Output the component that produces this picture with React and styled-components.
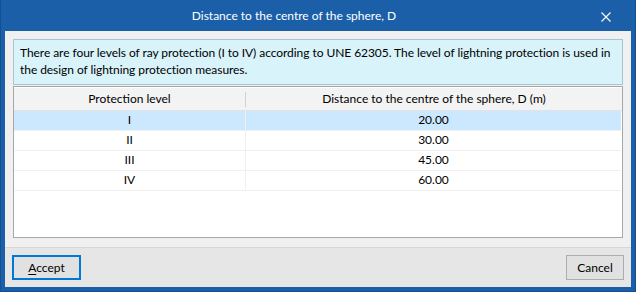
import React from 'react';
import styled, { createGlobalStyle } from 'styled-components';

const GlobalStyle = createGlobalStyle`
  html, body {
    margin: 0;
    padding: 0;
    background: #ffffff;
  }
  body {
    font-family: Lato, "Noto Sans", sans-serif;
    font-size: 12px;
    color: #000;
  }
`;

const Window = styled.div`
  width: 636px;
  height: 292px;
  box-sizing: border-box;
  background: #1a5fa8;
  border-left: 1px solid #134f92;
  border-right: 1px solid #134f92;
  border-bottom: 1px solid #134f92;
  padding: 0 4px 4px 4px;
  display: flex;
  flex-direction: column;
`;

const TitleBar = styled.div`
  height: 31px;
  flex: none;
  position: relative;
  display: flex;
  align-items: center;
  justify-content: center;
  color: #ffffff;
  font-size: 12px;
  padding: 0 48px 1px 0;
  box-sizing: border-box;
`;

const CloseButton = styled.div`
  position: absolute;
  right: 20px;
  top: 12px;
  width: 10px;
  height: 10px;
  display: flex;
`;

const Client = styled.div`
  flex: 1;
  background: #f0f0f0;
  display: flex;
  flex-direction: column;
`;

const Body = styled.div`
  flex: 1;
  padding: 8px 8px 9px 8px;
  display: flex;
  flex-direction: column;
`;

const InfoBox = styled.div`
  height: 46px;
  box-sizing: border-box;
  background: #d9f3fa;
  border: 1px solid #a7c7d0;
  padding: 4px 0 4px 6px;
  line-height: 17px;
  font-size: 12px;
  letter-spacing: -0.005em;
  color: #000;
`;

const Table = styled.div`
  flex: 1;
  margin-top: 1px;
  background: #ffffff;
  border: 1px solid #a8a8a8;
  display: flex;
  flex-direction: column;
`;

const HeaderRow = styled.div`
  display: grid;
  grid-template-columns: 232px 1fr;
  height: 22px;
  background: #f3f3f3;
  border-top: 1px solid #ffffff;
  border-bottom: 1px solid #e3e3e3;
`;

const HeaderCell = styled.div`
  display: flex;
  align-items: center;
  justify-content: center;
  position: relative;
  padding-bottom: 2px;
  box-sizing: border-box;
  border-right: ${p => (p.$divider ? '1px solid transparent' : 'none')};
  &::after {
    content: '';
    display: ${p => (p.$divider ? 'block' : 'none')};
    position: absolute;
    right: -1px;
    top: 4px;
    bottom: 3px;
    width: 1px;
    background: #d2d2d2;
  }
`;

const Row = styled.div`
  display: grid;
  grid-template-columns: 232px 1fr;
  height: 20px;
  margin-right: 1px;
  background: ${p => (p.$selected ? '#cce8ff' : '#ffffff')};
  border-bottom: 1px solid #f0f0f0;
  box-sizing: border-box;
`;

const Cell = styled.div`
  display: flex;
  align-items: center;
  justify-content: center;
  padding-bottom: 2px;
  border-right: ${p => (p.$divider ? '1px solid #f0f0f0' : 'none')};
`;

const Footer = styled.div`
  height: 40px;
  flex: none;
  box-sizing: border-box;
  background: #e6e6e6;
  border-top: 1px solid #d7d7d7;
  display: flex;
  align-items: flex-start;
  justify-content: space-between;
  padding: 7px 7px 0 7px;
`;

const Button = styled.button`
  height: 25px;
  width: ${p => p.$width}px;
  box-sizing: border-box;
  font-family: Lato, "Noto Sans", sans-serif;
  font-size: 12px;
  color: #000;
  background: #e1e1e1;
  border: ${p => (p.$default ? '2px solid #0078d7' : '1px solid #adadad')};
  padding: 0 0 1px 0;
  margin: 0;
  display: flex;
  align-items: center;
  justify-content: center;
  u {
    text-decoration: underline;
    text-underline-offset: 2px;
  }
`;

const rows = [
  { level: 'I', d: '20.00' },
  { level: 'II', d: '30.00' },
  { level: 'III', d: '45.00' },
  { level: 'IV', d: '60.00' },
];

export default function App() {
  return (
    <>
      <GlobalStyle />
      <Window>
        <TitleBar>
          Distance to the centre of the sphere, D
          <CloseButton>
            <svg width="10" height="10" viewBox="0 0 10 10">
              <path d="M0.5 0.5 L9.5 9.5 M9.5 0.5 L0.5 9.5" stroke="#ffffff" strokeWidth="1.1" fill="none" />
            </svg>
          </CloseButton>
        </TitleBar>
        <Client>
          <Body>
            <InfoBox>
              There are four levels of ray protection (I to IV) according to UNE 62305. The level of lightning protection is used in the design of lightning protection measures.
            </InfoBox>
            <Table>
              <HeaderRow>
                <HeaderCell $divider>Protection level</HeaderCell>
                <HeaderCell>Distance to the centre of the sphere, D (m)</HeaderCell>
              </HeaderRow>
              {rows.map((r, i) => (
                <Row key={r.level} $selected={i === 0}>
                  <Cell $divider>{r.level}</Cell>
                  <Cell>{r.d}</Cell>
                </Row>
              ))}
            </Table>
          </Body>
          <Footer>
            <Button $default $width={69}><span><u>A</u>ccept</span></Button>
            <Button $width={58}>Cancel</Button>
          </Footer>
        </Client>
      </Window>
    </>
  );
}
